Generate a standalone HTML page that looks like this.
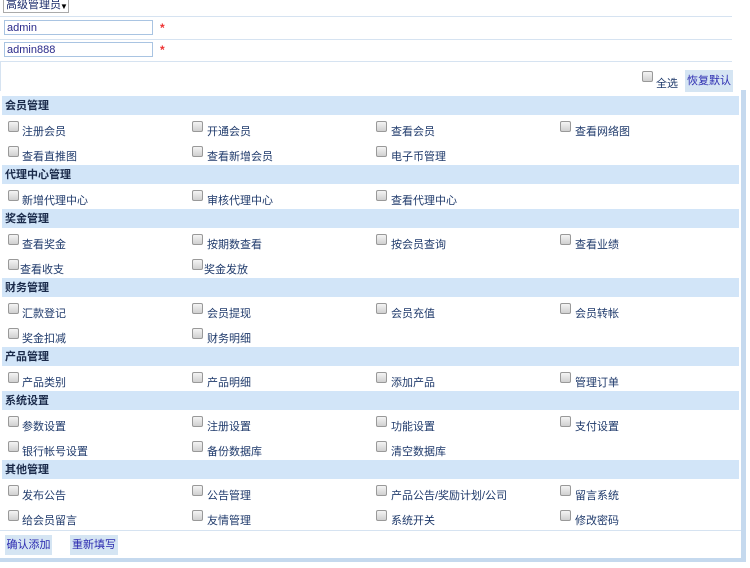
<!DOCTYPE html>
<html><head><meta charset="utf-8"><style>
*{margin:0;padding:0;box-sizing:border-box}
body{width:750px;height:568px;background:#fff;font-family:"Liberation Sans","Noto Sans CJK SC",sans-serif;font-size:11px;color:#1f3a6b;position:relative;overflow:hidden}
.a{position:absolute}
.line{position:absolute;left:0;width:732px;height:1px;background:#d6e3f1}
.inp{position:absolute;left:4px;width:149px;height:15px;border:1px solid #a9c4e2;font-size:11px;color:#2a2a8a;padding-left:2px;line-height:14px}
.star{position:absolute;left:160px;color:#e33;font-size:12px;font-weight:bold}
.cb{position:absolute;width:11px;height:11px;border:1px solid #999;border-radius:2px;background:linear-gradient(#f4f4f4,#d0d0d0)}
#main{position:absolute;left:2px;top:96px;width:737px}
.h{height:19px;background:#d2e5f8;font-weight:bold;color:#1a2a4a;line-height:21px;padding-left:3px;font-size:11px}
.r{height:25px;position:relative}
.r span{position:absolute;top:11px;line-height:12px;white-space:nowrap}
.r i{position:absolute;top:6px;width:11px;height:11px;border:1px solid #999;border-radius:2px;background:linear-gradient(#f4f4f4,#d0d0d0)}
.btn{position:absolute;height:20px;background:#d5e5f3;color:#2b2bb0;line-height:21px;text-align:center;font-size:11px}
</style></head><body>
<div class="a" style="left:3px;top:0;width:66px;height:13px;border:1px solid #aaa;border-top:none;font-size:11px;line-height:11px;color:#1a2a6a;padding-left:2px;white-space:nowrap;overflow:hidden">高级管理员<span style="position:absolute;left:56px;top:1px;font-size:8px;color:#000">▼</span></div>
<div class="line" style="top:16px"></div>
<div class="inp" style="top:20px">admin</div><span class="star" style="top:21px">*</span>
<div class="line" style="top:39px"></div>
<div class="inp" style="top:42px">admin888</div><span class="star" style="top:43px">*</span>
<div class="line" style="top:61px;left:0"></div>
<div class="a" style="left:0;top:61px;width:1px;height:30px;background:#d6e3f1"></div>
<div class="cb" style="left:642px;top:71px"></div>
<div class="a" style="left:656px;top:75px">全选</div>
<div class="btn" style="left:685px;top:70px;width:48px;height:22px;line-height:22px">恢复默认</div>
<div class="a" style="left:741px;top:90px;width:5px;height:472px;background:#c5d9ee"></div>
<div class="a" style="left:0;top:558px;width:746px;height:4px;background:#c5d9ee"></div>
<div id="main">
<div class="h">会员管理</div>
<div class="r"><i style="left:6px"></i><span style="left:20px">注册会员</span><i style="left:190px"></i><span style="left:205px">开通会员</span><i style="left:374px"></i><span style="left:389px">查看会员</span><i style="left:558px"></i><span style="left:573px">查看网络图</span></div>
<div class="r"><i style="left:6px"></i><span style="left:20px">查看直推图</span><i style="left:190px"></i><span style="left:205px">查看新增会员</span><i style="left:374px"></i><span style="left:389px">电子币管理</span></div>
<div class="h">代理中心管理</div>
<div class="r"><i style="left:6px"></i><span style="left:20px">新增代理中心</span><i style="left:190px"></i><span style="left:205px">审核代理中心</span><i style="left:374px"></i><span style="left:389px">查看代理中心</span></div>
<div class="h">奖金管理</div>
<div class="r"><i style="left:6px"></i><span style="left:20px">查看奖金</span><i style="left:190px"></i><span style="left:205px">按期数查看</span><i style="left:374px"></i><span style="left:389px">按会员查询</span><i style="left:558px"></i><span style="left:573px">查看业绩</span></div>
<div class="r"><i style="left:6px"></i><span style="left:18px">查看收支</span><i style="left:190px"></i><span style="left:202px">奖金发放</span></div>
<div class="h">财务管理</div>
<div class="r"><i style="left:6px"></i><span style="left:20px">汇款登记</span><i style="left:190px"></i><span style="left:205px">会员提现</span><i style="left:374px"></i><span style="left:389px">会员充值</span><i style="left:558px"></i><span style="left:573px">会员转帐</span></div>
<div class="r"><i style="left:6px"></i><span style="left:20px">奖金扣减</span><i style="left:190px"></i><span style="left:205px">财务明细</span></div>
<div class="h">产品管理</div>
<div class="r"><i style="left:6px"></i><span style="left:20px">产品类别</span><i style="left:190px"></i><span style="left:205px">产品明细</span><i style="left:374px"></i><span style="left:389px">添加产品</span><i style="left:558px"></i><span style="left:573px">管理订单</span></div>
<div class="h">系统设置</div>
<div class="r"><i style="left:6px"></i><span style="left:20px">参数设置</span><i style="left:190px"></i><span style="left:205px">注册设置</span><i style="left:374px"></i><span style="left:389px">功能设置</span><i style="left:558px"></i><span style="left:573px">支付设置</span></div>
<div class="r"><i style="left:6px"></i><span style="left:20px">银行帐号设置</span><i style="left:190px"></i><span style="left:205px">备份数据库</span><i style="left:374px"></i><span style="left:389px">清空数据库</span></div>
<div class="h">其他管理</div>
<div class="r"><i style="left:6px"></i><span style="left:20px">发布公告</span><i style="left:190px"></i><span style="left:205px">公告管理</span><i style="left:374px"></i><span style="left:389px">产品公告/奖励计划/公司</span><i style="left:558px"></i><span style="left:573px">留言系统</span></div>
<div class="r"><i style="left:6px"></i><span style="left:20px">给会员留言</span><i style="left:190px"></i><span style="left:205px">友情管理</span><i style="left:374px"></i><span style="left:389px">系统开关</span><i style="left:558px"></i><span style="left:573px">修改密码</span></div>
</div>
<div class="a" style="left:0;top:530px;width:741px;height:1px;background:#d6e3f1"></div>
<div class="btn" style="left:5px;top:535px;width:47px">确认添加</div>
<div class="btn" style="left:70px;top:535px;width:48px">重新填写</div>
</body></html>
